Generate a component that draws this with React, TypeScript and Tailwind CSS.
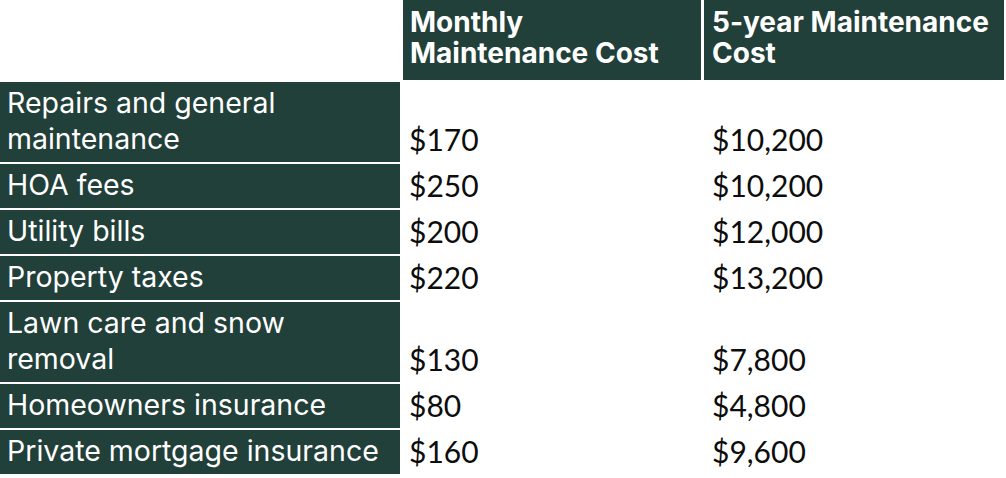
const rows: { label: string; monthly: string; total: string }[] = [
  { label: "Repairs and general maintenance", monthly: "$170", total: "$10,200" },
  { label: "HOA fees", monthly: "$250", total: "$10,200" },
  { label: "Utility bills", monthly: "$200", total: "$12,000" },
  { label: "Property taxes", monthly: "$220", total: "$13,200" },
  { label: "Lawn care and snow removal", monthly: "$130", total: "$7,800" },
  { label: "Homeowners insurance", monthly: "$80", total: "$4,800" },
  { label: "Private mortgage insurance", monthly: "$160", total: "$9,600" },
];

export default function App() {
  return (
    <div className="h-[478px] w-[1006px] bg-white">
      <div className="grid grid-cols-[400px_298px_300px] gap-x-[3px] gap-y-[2px]">
        <div />
        <div className="h-[80px] bg-[#22403a] px-[7px] pt-[7px] font-['Inter',sans-serif] text-[28px] font-bold leading-[31px] text-white">
          Monthly
          <br />
          Maintenance Cost
        </div>
        <div className="h-[80px] bg-[#22403a] px-[8px] pt-[7px] font-['Inter',sans-serif] text-[28px] font-bold leading-[31px] text-white">
          5-year Maintenance
          <br />
          Cost
        </div>
        {rows.map((r) => (
          <Row key={r.label} {...r} />
        ))}
      </div>
    </div>
  );
}

function Row({ label, monthly, total }: { label: string; monthly: string; total: string }) {
  return (
    <>
      <div className="bg-[#22403a] px-[7px] pt-[3px] pb-[5px] font-['Inter',sans-serif] text-[28.5px] leading-[36px] text-white">
        {label}
      </div>
      <div className="flex items-end px-[6px] pb-[5px] font-['Lato',sans-serif] text-[30px] leading-[36px] text-[#0d0d0d]">
        {monthly}
      </div>
      <div className="flex items-end px-[8px] pb-[5px] font-['Lato',sans-serif] text-[30px] leading-[36px] text-[#0d0d0d]">
        {total}
      </div>
    </>
  );
}
